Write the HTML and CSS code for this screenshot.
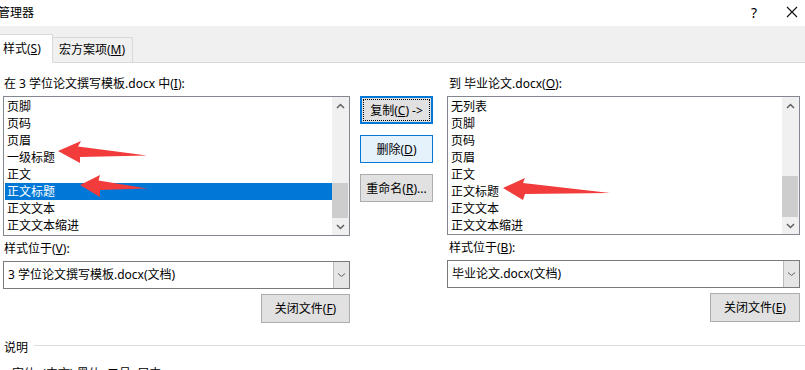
FILE: index.html
```html
<!DOCTYPE html>
<html lang="zh-CN">
<head>
<meta charset="utf-8">
<title>管理器</title>
<link rel="stylesheet" href="styles.css">
</head>
<body>
<div class="dlg">
  <div class="titlebar">
    <span class="title">管理器</span>
    <div class="tb-btns">
      <span class="help">?</span>
      <svg class="close" width="12" height="12" viewBox="0 0 12 12"><path d="M1 1L11 11M11 1L1 11" stroke="#111" stroke-width="1.1" fill="none"/></svg>
    </div>
  </div>
  <div class="tabstrip">
    <div class="tab active">样式(<u>S</u>)</div>
    <div class="tab">宏方案项(<u>M</u>)</div>
  </div>
  <div class="panel">
    <div class="col side">
      <div class="lbl head">在 3 学位论文撰写模板.docx 中(<u>I</u>):</div>
      <div class="listbox">
        <ul class="items">
          <li>页脚</li>
          <li>页码</li>
          <li>页眉</li>
          <li>一级标题</li>
          <li>正文</li>
          <li class="sel">正文标题</li>
          <li>正文文本</li>
          <li>正文文本缩进</li>
        </ul>
        <div class="sb">
          <div class="sb-btn"><svg width="9" height="6" viewBox="0 0 9 6"><path d="M1 5L4.5 1.5L8 5" stroke="#606060" stroke-width="1.5" fill="none"/></svg></div>
          <div class="track"><div class="thumb" style="height:35px"></div></div>
          <div class="sb-btn"><svg width="9" height="6" viewBox="0 0 9 6"><path d="M1 1L4.5 4.5L8 1" stroke="#606060" stroke-width="1.5" fill="none"/></svg></div>
        </div>
      </div>
      <div class="lbl sub">样式位于(<u>V</u>):</div>
      <div class="combo">
        <span class="combo-text">3 学位论文撰写模板.docx(文档)</span>
        <div class="drop"><svg width="9" height="6" viewBox="0 0 9 6"><path d="M1 1.5L4.5 4.5L8 1.5" stroke="#606060" stroke-width="1" fill="none"/></svg></div>
      </div>
      <div class="btnrow"><button class="btn">关闭文件(<u>F</u>)</button></div>
    </div>

    <div class="col mid">
      <button class="btn mbtn focus"><span class="focus-ring"></span>复制(<u>C</u>) -&gt;</button>
      <button class="btn mbtn hover">删除(<u>D</u>)</button>
      <button class="btn mbtn">重命名(<u>R</u>)...</button>
    </div>

    <div class="col side right">
      <div class="lbl head">到 毕业论文.docx(<u>O</u>):</div>
      <div class="listbox">
        <ul class="items">
          <li>无列表</li>
          <li>页脚</li>
          <li>页码</li>
          <li>页眉</li>
          <li>正文</li>
          <li>正文标题</li>
          <li>正文文本</li>
          <li>正文文本缩进</li>
        </ul>
        <div class="sb">
          <div class="sb-btn"><svg width="9" height="6" viewBox="0 0 9 6"><path d="M1 5L4.5 1.5L8 5" stroke="#606060" stroke-width="1.5" fill="none"/></svg></div>
          <div class="track"><div class="thumb" style="height:41px"></div></div>
          <div class="sb-btn"><svg width="9" height="6" viewBox="0 0 9 6"><path d="M1 1L4.5 4.5L8 1" stroke="#606060" stroke-width="1.5" fill="none"/></svg></div>
        </div>
      </div>
      <div class="lbl sub">样式位于(<u>B</u>):</div>
      <div class="combo">
        <span class="combo-text">毕业论文.docx(文档)</span>
        <div class="drop"><svg width="9" height="6" viewBox="0 0 9 6"><path d="M1 1.5L4.5 4.5L8 1.5" stroke="#606060" stroke-width="1" fill="none"/></svg></div>
      </div>
      <div class="btnrow"><button class="btn">关闭文件(<u>E</u>)</button></div>
    </div>
  </div>

  <div class="desc">
    <div class="desc-head"><span>说明</span><span class="rule"></span></div>
    <div class="desc-text">字体: (中文) 黑体, 二号, 居中</div>
  </div>

  <svg class="annot" width="805" height="370" viewBox="0 0 805 370">
    <polygon points="58,151 81,141 78,146.5 147,155.5 80,157 80,163" fill="#f23b3b"/>
    <polygon points="80,185 100,175 98.5,180.5 147,188.5 100,190 100,197" fill="#f23b3b"/>
    <polygon points="503,188 525,178 523,183 610,193 525,194 523,200" fill="#f23b3b"/>
  </svg>
</div>
</body>
</html>
```

FILE: styles.css
```css
* { box-sizing: border-box; }
html, body { margin: 0; padding: 0; background: #fff; }
body {
  font-family: "Noto Sans", "Noto Sans CJK SC", sans-serif;
  font-size: 12px;
  color: #000;
}
u { text-decoration: underline; text-underline-offset: 1px; }

.dlg {
  position: relative;
  width: 805px;
  height: 370px;
  overflow: hidden;
  background: #fff;
}

.titlebar {
  height: 26px;
  display: flex;
  align-items: center;
  justify-content: space-between;
}
.title { margin-left: -2px; line-height: 17px; padding-bottom: 2px; }
.tb-btns { display: flex; align-items: center; gap: 29px; margin-right: 7px; padding-bottom: 2px; }
.help { font-size: 14px; line-height: 17px; }
.close { display: block; }

.tabstrip {
  height: 37px;
  background: #f0f0f0;
  border-bottom: 1px solid #d9d9d9;
  display: flex;
  align-items: flex-end;
}
.tab {
  height: 26px;
  margin-bottom: -1px;
  padding: 0 7px 0 6px;
  border: 1px solid #d9d9d9;
  border-left: none;
  background: #f0f0f0;
  line-height: 24px;
}
.tab.active {
  height: 29px;
  width: 53px;
  padding: 0 0 0 3px;
  background: #fff;
  border-bottom-color: #fff;
  line-height: 27px;
}

.panel {
  display: grid;
  grid-template-columns: 347px 77px 353px;
  column-gap: 10px;
  padding-left: 3px;
}
.col { display: flex; flex-direction: column; }

.lbl { line-height: 17px; }
.lbl.head { height: 33px; padding: 12px 0 0 1px; }
.right .lbl.head { padding-left: 2px; }
.lbl.sub { height: 25px; padding: 4px 0 0 1px; }
.right .lbl.sub { padding-left: 2px; }

.listbox {
  height: 140px;
  border: 1px solid #828790;
  display: flex;
}
.right .listbox { height: 139px; }
.items {
  list-style: none;
  margin: 0;
  padding: 1px 0 0 1px;
  flex: 1;
}
.items li {
  height: 17px;
  line-height: 17px;
  padding-left: 2px;
}
.items li.sel { background: #0078d7; color: #fff; }

.sb {
  width: 17px;
  background: #f0f0f0;
  display: flex;
  flex-direction: column;
}
.sb-btn {
  height: 17px;
  display: flex;
  align-items: center;
  justify-content: center;
}
.sb-btn svg { display: block; }
.track {
  flex: 1;
  display: flex;
  flex-direction: column;
  justify-content: flex-end;
  padding: 0 1px 0 0;
}
.thumb { background: #cdcdcd; }

.combo {
  height: 28px;
  border: 1px solid #7a7a7a;
  display: flex;
  align-items: stretch;
}
.combo-text { flex: 1; line-height: 26px; padding-left: 4px; }
.drop {
  width: 16px;
  background: #e5e5e5;
  border-left: 1px solid #bcbcbc;
  display: flex;
  align-items: center;
  justify-content: center;
}
.drop svg { display: block; }

.btnrow { display: flex; justify-content: flex-end; padding-top: 5px; }
.btn {
  font: inherit;
  color: #000;
  background: #e1e1e1;
  border: 1px solid #adadad;
  height: 29px;
  width: 89px;
  padding: 0;
  margin: 0;
  line-height: 17px;
  cursor: default;
}
.right .btn { width: 90px; }

.mid { gap: 11px; padding-top: 33px; align-items: flex-start; }
.mbtn { width: 73px; height: 28px; position: relative; }
.mbtn.focus { border: 2px solid #0078d7; }
.focus-ring {
  position: absolute;
  inset: 1px;
  border: 1px dotted #000;
}
.mbtn.hover { background: #e5f1fb; border-color: #0078d7; }

.desc { padding-top: 16px; }
.desc-head { display: flex; align-items: center; height: 17px; padding-left: 4px; }
.desc-head span:first-child { line-height: 17px; }
.rule {
  flex: 1;
  height: 1px;
  background: #dcdcdc;
  margin: 0 0 4px 6px;
}
.desc-text { padding: 9px 0 0 12px; line-height: 17px; }

.annot { position: absolute; left: 0; top: 0; pointer-events: none; }
```
